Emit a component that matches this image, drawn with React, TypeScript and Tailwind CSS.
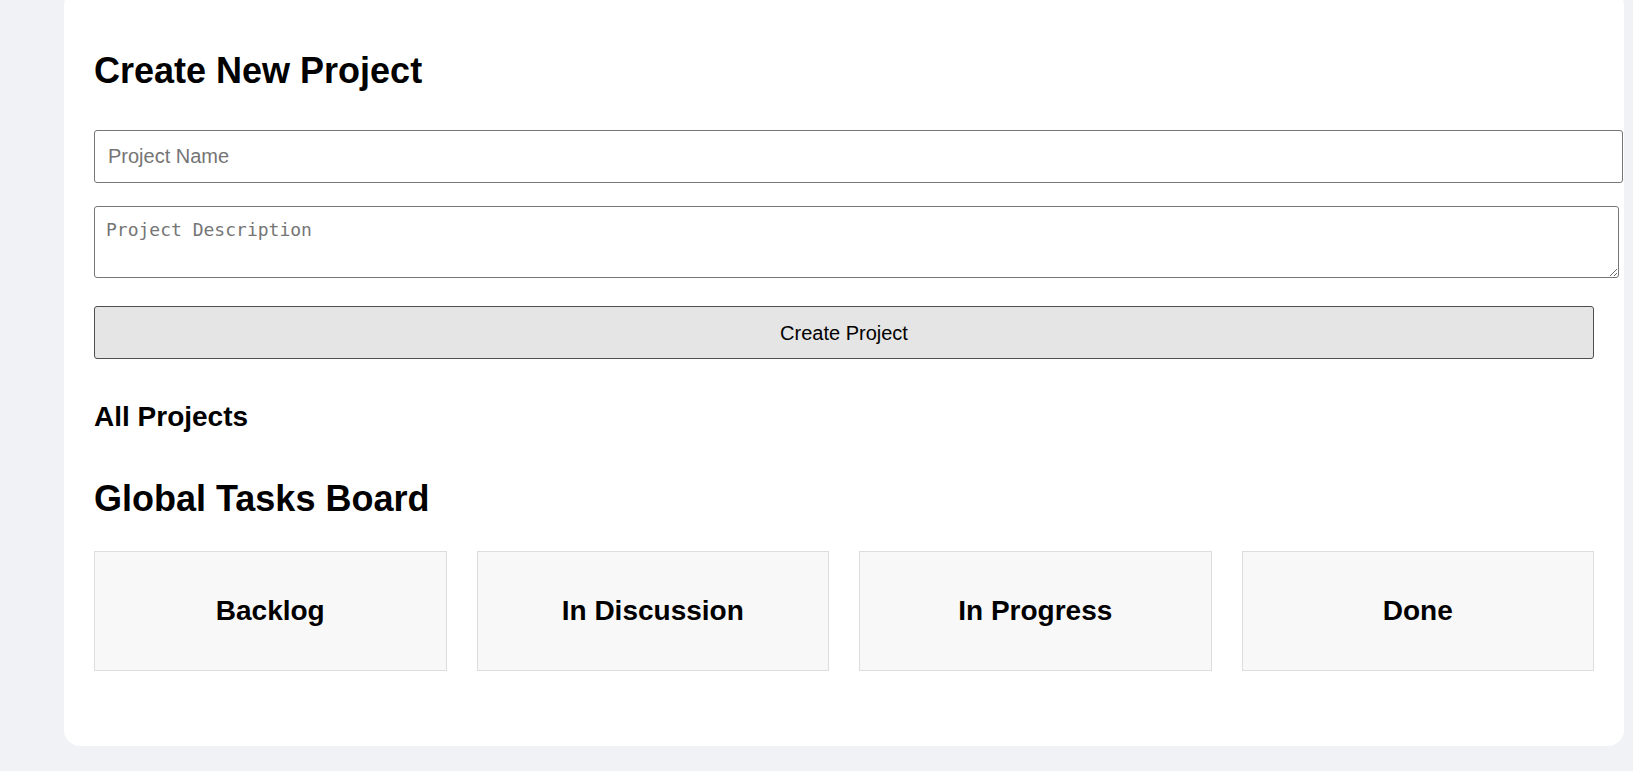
const columns = ["Backlog", "In Discussion", "In Progress", "Done"];

function App() {
  return (
    <div className="min-h-screen bg-[#f0f2f5] pl-[64px] pr-[9px] font-['Liberation_Sans',Arial,sans-serif] text-black">
      <div className="mt-[-10px] rounded-2xl bg-white px-[30px] pt-[63px] pb-[75px]">
        <h1 className="text-[36px] leading-none font-bold">Create New Project</h1>

        <input
          type="text"
          placeholder="Project Name"
          className="mt-[41px] block h-[53px] w-[calc(100%+29px)] rounded-[3px] border border-[#767676] bg-white px-[13px] text-[20px] placeholder:text-[#757575] outline-none"
        />

        <textarea
          placeholder="Project Description"
          className="mt-[23px] block h-[72px] w-[calc(100%+25px)] rounded-[3px] border border-[#767676] bg-white px-[11px] pt-[12px] font-['DejaVu_Sans_Mono',monospace] text-[18px] leading-[21px] placeholder:text-[#757575] outline-none"
        />

        <button className="mt-[28px] block h-[53px] w-full rounded-[3px] border border-[#4f4f4f] bg-[#e5e5e5] text-[20px]">
          Create Project
        </button>

        <h2 className="mt-[44px] text-[28px] leading-none font-bold">All Projects</h2>

        <h2 className="mt-[50px] text-[36px] leading-none font-bold">Global Tasks Board</h2>

        <div className="mt-[34px] grid grid-cols-4 gap-[30px]">
          {columns.map((col) => (
            <div
              key={col}
              className="flex h-[120px] items-center justify-center border border-[#dddddd] bg-[#f8f8f8]"
            >
              <h3 className="text-[28px] leading-none font-bold">{col}</h3>
            </div>
          ))}
        </div>
      </div>
    </div>
  );
}

export default App;
